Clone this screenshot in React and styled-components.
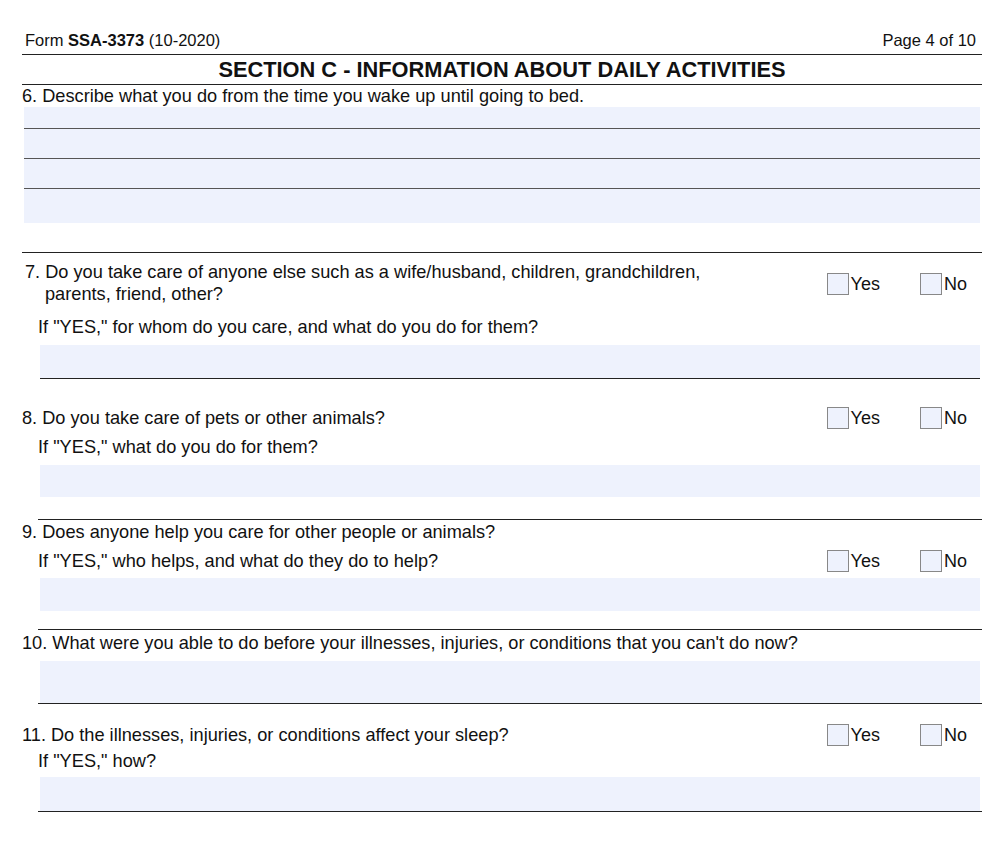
import React from "react";
import styled, { createGlobalStyle } from "styled-components";

const G = createGlobalStyle`
  body { margin:0; background:#fff; font-family:"Liberation Sans", Arial, sans-serif; color:#111; }
`;
const Page = styled.div`width:1006px;height:865px;padding:0 24px 0 22px;box-sizing:border-box;`;
const Header = styled.div`display:flex;justify-content:space-between;align-items:flex-end;height:55px;padding:0 6px 4px 3px;font-size:16.5px;border-bottom:1.5px solid #222;box-sizing:border-box;`;
const Title = styled.div`text-align:center;font-weight:bold;font-size:21.8px;height:30px;line-height:30px;border-bottom:1.5px solid #222;box-sizing:border-box;`;
const Q = styled.div`font-size:18.2px;line-height:22px;padding-left:${p=>p.indent||0}px;white-space:nowrap;`;
const Row = styled.div`display:flex;justify-content:space-between;align-items:flex-start;margin-top:${p=>p.mt||0}px;`;
const Checks = styled.div`display:flex;gap:40px;margin-right:15px;font-size:18px;`;
const Check = styled.label`display:flex;align-items:center;gap:2px;`;
const Box = styled.span`width:20px;height:20px;border:1px solid #888;background:#eef2fd;display:inline-block;`;
const Fill = styled.div`margin:${p=>p.mt||0}px ${p=>p.mr||2}px 0 ${p=>p.ml||2}px;height:${p=>p.h}px;background:#eef2fd;`;
const Lined = styled.div`height:30px;border-bottom:1px solid #555;box-sizing:border-box;&:last-child{border:none;}`;
const Rule = styled.div`margin:${p=>p.mt||0}px 0 0 ${p=>p.ml||0}px;border-top:1.5px solid #222;`;

const YN = () => (
  <Checks>
    <Check><Box/>Yes</Check>
    <Check><Box/>No</Check>
  </Checks>
);

export default function App(){
  return (<Page><G/>
    <Header><span>Form <b>SSA-3373</b> (10-2020)</span><span>Page 4 of 10</span></Header>
    <Title>SECTION C - INFORMATION ABOUT DAILY ACTIVITIES</Title>
    <Q>6. Describe what you do from the time you wake up until going to bed.</Q>
    <Fill h={116} mt={0}><Lined style={{height:22}}/><Lined/><Lined/><Lined/></Fill>
    <Rule mt={29}/>
    <Row mt={8}><div><Q indent={3}>7. Do you take care of anyone else such as a wife/husband, children, grandchildren,</Q><Q indent={23}>parents, friend, other?</Q></div><div style={{marginTop:12}}><YN/></div></Row>
    <Q indent={16} style={{marginTop:11}}>If "YES," for whom do you care, and what do you do for them?</Q>
    <Fill h={33} mt={7} ml={18}/>
    <Rule ml={18} style={{marginRight:2}}/>
    <Row mt={28}><Q>8. Do you take care of pets or other animals?</Q><YN/></Row>
    <Q indent={16} style={{marginTop:7}}>If "YES," what do you do for them?</Q>
    <Fill h={32} mt={7} ml={18}/>
    <Rule ml={16} mt={22}/>
    <Row mt={1}><div><Q>9. Does anyone help you care for other people or animals?</Q><Q indent={16} style={{marginTop:7}}>If "YES," who helps, and what do they do to help?</Q></div><div style={{marginTop:29}}><YN/></div></Row>
    <Fill h={33} mt={6} ml={18}/>
    <Rule ml={16} mt={18}/>
    <Q style={{marginTop:2}}>10. What were you able to do before your illnesses, injuries, or conditions that you can't do now?</Q>
    <Fill h={42} mt={7} ml={18}/>
    <Rule ml={16}/>
    <Row mt={20}><Q>11. Do the illnesses, injuries, or conditions affect your sleep?</Q><YN/></Row>
    <Q indent={16} style={{marginTop:4}}>If "YES," how?</Q>
    <Fill h={34} mt={5} ml={18}/>
    <Rule ml={16}/>
  </Page>);
}
